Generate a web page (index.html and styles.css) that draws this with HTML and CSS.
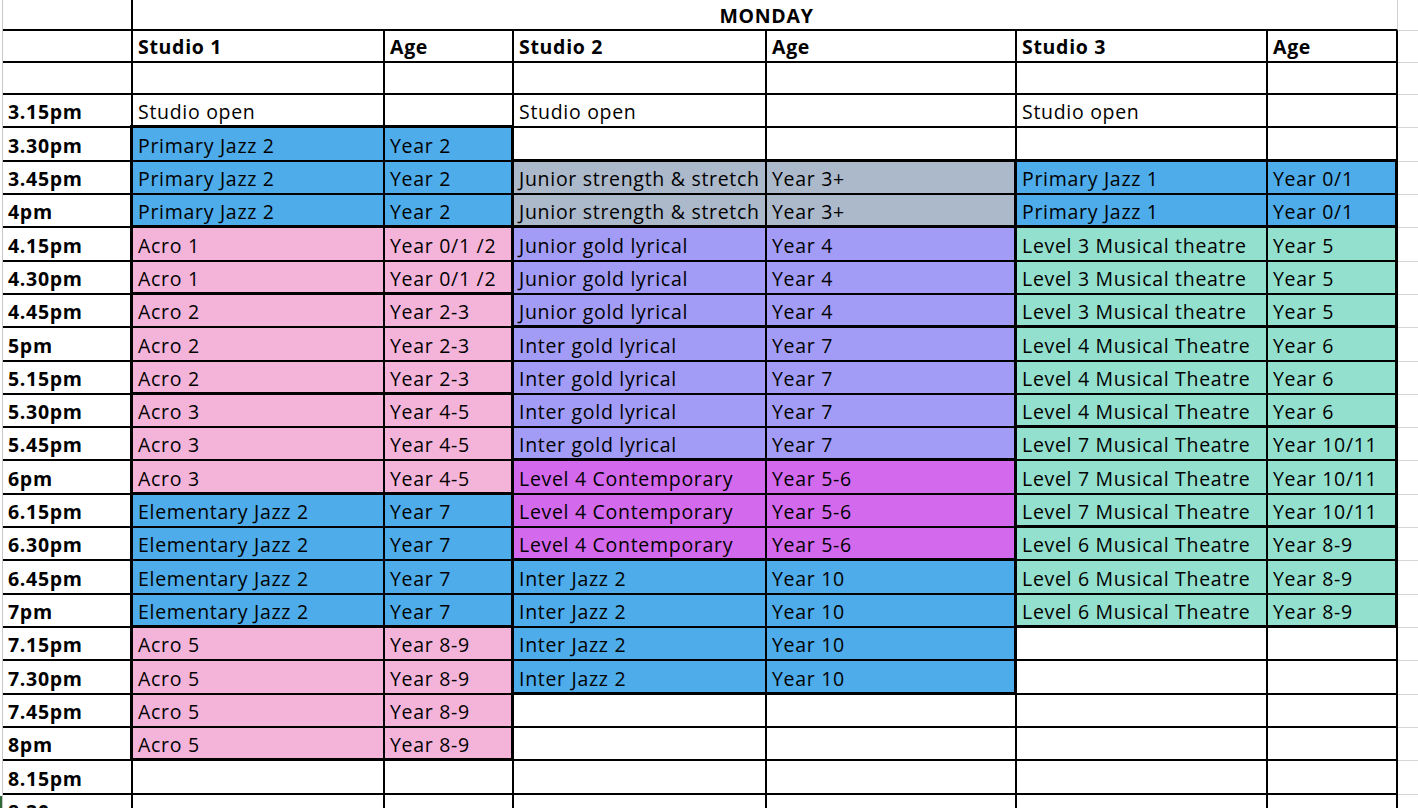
FILE: index.html
```html
<!DOCTYPE html>
<html lang="en">
<head>
<meta charset="utf-8">
<title>Monday timetable</title>
<link rel="stylesheet" href="styles.css">
</head>
<body>
<div class="edge"><span class="edge-mark"></span></div>
<div class="sheet">
  <div class="layer cells">
    <!-- title row -->
    <div class="cell"></div>
    <div class="cell title b">MONDAY</div>
    <div class="cell g"></div>
    <!-- header -->
    <div class="cell"></div>
    <div class="cell b">Studio 1</div><div class="cell b">Age</div>
    <div class="cell b">Studio 2</div><div class="cell b">Age</div>
    <div class="cell b">Studio 3</div><div class="cell b">Age</div>
    <div class="cell g"></div>
    <!-- blank -->
    <div class="cell"></div>
    <div class="cell"></div><div class="cell"></div>
    <div class="cell"></div><div class="cell"></div>
    <div class="cell"></div><div class="cell"></div>
    <div class="cell g"></div>
    <!-- 3.15 -->
    <div class="cell b">3.15pm</div>
    <div class="cell">Studio open</div><div class="cell"></div>
    <div class="cell">Studio open</div><div class="cell"></div>
    <div class="cell">Studio open</div><div class="cell"></div>
    <div class="cell g"></div>
    <!-- 3.30 -->
    <div class="cell b">3.30pm</div>
    <div class="cell blue">Primary Jazz 2</div><div class="cell blue">Year 2</div>
    <div class="cell"></div><div class="cell"></div>
    <div class="cell"></div><div class="cell"></div>
    <div class="cell g"></div>
    <!-- 3.45 -->
    <div class="cell b">3.45pm</div>
    <div class="cell blue">Primary Jazz 2</div><div class="cell blue">Year 2</div>
    <div class="cell grey">Junior strength &amp; stretch</div><div class="cell grey">Year 3+</div>
    <div class="cell blue">Primary Jazz 1</div><div class="cell blue">Year 0/1</div>
    <div class="cell g"></div>
    <!-- 4pm -->
    <div class="cell b">4pm</div>
    <div class="cell blue">Primary Jazz 2</div><div class="cell blue">Year 2</div>
    <div class="cell grey">Junior strength &amp; stretch</div><div class="cell grey">Year 3+</div>
    <div class="cell blue">Primary Jazz 1</div><div class="cell blue">Year 0/1</div>
    <div class="cell g"></div>
    <!-- 4.15 -->
    <div class="cell b">4.15pm</div>
    <div class="cell pink">Acro 1</div><div class="cell pink">Year 0/1 /2</div>
    <div class="cell lav">Junior gold lyrical</div><div class="cell lav">Year 4</div>
    <div class="cell teal">Level 3 Musical theatre</div><div class="cell teal">Year 5</div>
    <div class="cell g"></div>
    <!-- 4.30 -->
    <div class="cell b">4.30pm</div>
    <div class="cell pink">Acro 1</div><div class="cell pink">Year 0/1 /2</div>
    <div class="cell lav">Junior gold lyrical</div><div class="cell lav">Year 4</div>
    <div class="cell teal">Level 3 Musical theatre</div><div class="cell teal">Year 5</div>
    <div class="cell g"></div>
    <!-- 4.45 -->
    <div class="cell b">4.45pm</div>
    <div class="cell pink">Acro 2</div><div class="cell pink">Year 2-3</div>
    <div class="cell lav">Junior gold lyrical</div><div class="cell lav">Year 4</div>
    <div class="cell teal">Level 3 Musical theatre</div><div class="cell teal">Year 5</div>
    <div class="cell g"></div>
    <!-- 5pm -->
    <div class="cell b">5pm</div>
    <div class="cell pink">Acro 2</div><div class="cell pink">Year 2-3</div>
    <div class="cell lav">Inter gold lyrical</div><div class="cell lav">Year 7</div>
    <div class="cell teal">Level 4 Musical Theatre</div><div class="cell teal">Year 6</div>
    <div class="cell g"></div>
    <!-- 5.15 -->
    <div class="cell b">5.15pm</div>
    <div class="cell pink">Acro 2</div><div class="cell pink">Year 2-3</div>
    <div class="cell lav">Inter gold lyrical</div><div class="cell lav">Year 7</div>
    <div class="cell teal">Level 4 Musical Theatre</div><div class="cell teal">Year 6</div>
    <div class="cell g"></div>
    <!-- 5.30 -->
    <div class="cell b">5.30pm</div>
    <div class="cell pink">Acro 3</div><div class="cell pink">Year 4-5</div>
    <div class="cell lav">Inter gold lyrical</div><div class="cell lav">Year 7</div>
    <div class="cell teal">Level 4 Musical Theatre</div><div class="cell teal">Year 6</div>
    <div class="cell g"></div>
    <!-- 5.45 -->
    <div class="cell b">5.45pm</div>
    <div class="cell pink">Acro 3</div><div class="cell pink">Year 4-5</div>
    <div class="cell lav">Inter gold lyrical</div><div class="cell lav">Year 7</div>
    <div class="cell teal">Level 7 Musical Theatre</div><div class="cell teal">Year 10/11</div>
    <div class="cell g"></div>
    <!-- 6pm -->
    <div class="cell b">6pm</div>
    <div class="cell pink">Acro 3</div><div class="cell pink">Year 4-5</div>
    <div class="cell mag">Level 4 Contemporary</div><div class="cell mag">Year 5-6</div>
    <div class="cell teal">Level 7 Musical Theatre</div><div class="cell teal">Year 10/11</div>
    <div class="cell g"></div>
    <!-- 6.15 -->
    <div class="cell b">6.15pm</div>
    <div class="cell blue">Elementary Jazz 2</div><div class="cell blue">Year 7</div>
    <div class="cell mag">Level 4 Contemporary</div><div class="cell mag">Year 5-6</div>
    <div class="cell teal">Level 7 Musical Theatre</div><div class="cell teal">Year 10/11</div>
    <div class="cell g"></div>
    <!-- 6.30 -->
    <div class="cell b">6.30pm</div>
    <div class="cell blue">Elementary Jazz 2</div><div class="cell blue">Year 7</div>
    <div class="cell mag">Level 4 Contemporary</div><div class="cell mag">Year 5-6</div>
    <div class="cell teal">Level 6 Musical Theatre</div><div class="cell teal">Year 8-9</div>
    <div class="cell g"></div>
    <!-- 6.45 -->
    <div class="cell b">6.45pm</div>
    <div class="cell blue">Elementary Jazz 2</div><div class="cell blue">Year 7</div>
    <div class="cell blue">Inter Jazz 2</div><div class="cell blue">Year 10</div>
    <div class="cell teal">Level 6 Musical Theatre</div><div class="cell teal">Year 8-9</div>
    <div class="cell g"></div>
    <!-- 7pm -->
    <div class="cell b">7pm</div>
    <div class="cell blue">Elementary Jazz 2</div><div class="cell blue">Year 7</div>
    <div class="cell blue">Inter Jazz 2</div><div class="cell blue">Year 10</div>
    <div class="cell teal">Level 6 Musical Theatre</div><div class="cell teal">Year 8-9</div>
    <div class="cell g"></div>
    <!-- 7.15 -->
    <div class="cell b">7.15pm</div>
    <div class="cell pink">Acro 5</div><div class="cell pink">Year 8-9</div>
    <div class="cell blue">Inter Jazz 2</div><div class="cell blue">Year 10</div>
    <div class="cell"></div><div class="cell"></div>
    <div class="cell g"></div>
    <!-- 7.30 -->
    <div class="cell b">7.30pm</div>
    <div class="cell pink">Acro 5</div><div class="cell pink">Year 8-9</div>
    <div class="cell blue">Inter Jazz 2</div><div class="cell blue">Year 10</div>
    <div class="cell"></div><div class="cell"></div>
    <div class="cell g"></div>
    <!-- 7.45 -->
    <div class="cell b">7.45pm</div>
    <div class="cell pink">Acro 5</div><div class="cell pink">Year 8-9</div>
    <div class="cell"></div><div class="cell"></div>
    <div class="cell"></div><div class="cell"></div>
    <div class="cell g"></div>
    <!-- 8pm -->
    <div class="cell b">8pm</div>
    <div class="cell pink">Acro 5</div><div class="cell pink">Year 8-9</div>
    <div class="cell"></div><div class="cell"></div>
    <div class="cell"></div><div class="cell"></div>
    <div class="cell g"></div>
    <!-- 8.15 -->
    <div class="cell b">8.15pm</div>
    <div class="cell"></div><div class="cell"></div>
    <div class="cell"></div><div class="cell"></div>
    <div class="cell"></div><div class="cell"></div>
    <div class="cell g"></div>
    <!-- 8.30 -->
    <div class="cell b">8.30pm</div>
    <div class="cell"></div><div class="cell"></div>
    <div class="cell"></div><div class="cell"></div>
    <div class="cell"></div><div class="cell"></div>
    <div class="cell g"></div>
  </div>

  <div class="layer frames" aria-hidden="true">
    <div class="frame s1" style="grid-row: 5 / 8"></div>
    <div class="frame s1" style="grid-row: 8 / 10"></div>
    <div class="frame s1" style="grid-row: 10 / 13"></div>
    <div class="frame s1" style="grid-row: 13 / 16"></div>
    <div class="frame s1" style="grid-row: 16 / 20"></div>
    <div class="frame s1" style="grid-row: 20 / 24"></div>

    <div class="frame s2" style="grid-row: 6 / 8"></div>
    <div class="frame s2" style="grid-row: 8 / 11"></div>
    <div class="frame s2" style="grid-row: 11 / 15"></div>
    <div class="frame s2" style="grid-row: 15 / 18"></div>
    <div class="frame s2" style="grid-row: 18 / 22"></div>

    <div class="frame s3" style="grid-row: 6 / 8"></div>
    <div class="frame s3" style="grid-row: 8 / 11"></div>
    <div class="frame s3" style="grid-row: 11 / 14"></div>
    <div class="frame s3" style="grid-row: 14 / 17"></div>
    <div class="frame s3" style="grid-row: 17 / 20"></div>
  </div>
</div>
</body>
</html>
```

FILE: styles.css
```css
* { box-sizing: border-box; }

html, body {
  margin: 0;
  height: 100%;
  overflow: hidden;
  background: #ffffff;
}

body {
  display: flex;
  font-family: "Open Sans", Lato, "Liberation Sans", sans-serif;
  font-size: 19.5px;
  letter-spacing: 0.7px;
  color: #000;
}

.edge {
  width: 2px;
  flex: none;
  display: flex;
  flex-direction: column;
  justify-content: flex-end;
}

.edge-mark {
  display: block;
  height: 12px;
  background: #2f6b3a;
}

.sheet {
  flex: 1;
  display: grid;
  border-left: 1px solid #c9c9c9;
  overflow: hidden;
}

.layer {
  grid-area: 1 / 1;
  display: grid;
  grid-template-columns: 130px 252px 129px 253px 250px 251px 130px 60px;
  grid-template-rows: 31px 32px 32px repeat(22, 33.32px);
}

.frames {
  pointer-events: none;
}

.cell {
  border-right: 2px solid #000;
  border-bottom: 2px solid #000;
  padding: 0 2px 4px 5px;
  display: flex;
  align-items: flex-end;
  white-space: nowrap;
  overflow: hidden;
  line-height: 20px;
}

.b { font-weight: 700; }

.title {
  grid-column: span 6;
  justify-content: center;
  border-right: 1px solid #d0d0d0;
  padding-bottom: 3px;
}

.g {
  border-right: none;
  border-bottom: 1px solid #d6d6d6;
}

.blue { background: #4dace9; }
.pink { background: #f4b4da; }
.grey { background: #acb9ca; }
.lav  { background: #a39cf6; }
.mag  { background: #d36aee; }
.teal { background: #93e0cf; }

.frame {
  border: 3px solid #000;
  margin: -3px 0 0 -3px;
}

.s1 { grid-column: 2 / 4; }
.s2 { grid-column: 4 / 6; }
.s3 { grid-column: 6 / 8; }
```
